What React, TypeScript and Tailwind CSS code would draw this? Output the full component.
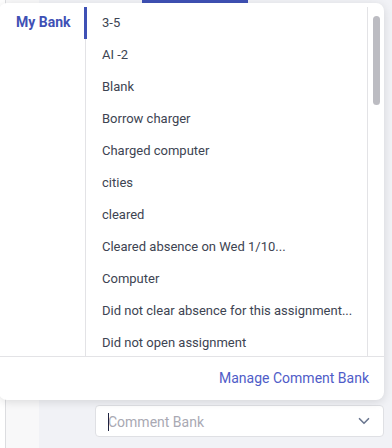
import { ChevronDown } from "lucide-react";

const comments = [
  "3-5",
  "AI -2",
  "Blank",
  "Borrow charger",
  "Charged computer",
  "cities",
  "cleared",
  "Cleared absence on Wed 1/10...",
  "Computer",
  "Did not clear absence for this assignment...",
  "Did not open assignment",
];

export default function App() {
  return (
    <div
      className="relative h-[448px] w-[392px] overflow-hidden bg-[#f1f2f6]"
      style={{ fontFamily: "Roboto, 'Liberation Sans', sans-serif" }}
    >
      {/* page behind the popover */}
      <div className="flex h-full">
        <div className="w-[6px] border-r border-[#dcdde0] bg-white" />
        <div className="w-[33px] bg-[#f8f8f9]" />
        <div className="flex flex-1 flex-col">
          <div className="flex h-[4px]">
            <div className="w-[103px]" />
            <div className="w-[106px] bg-[#3f51b5]" />
          </div>
          <div className="flex-1" />
          <div className="flex pb-[11px] pl-[56px] pr-[8px]">
            <div className="flex h-[32px] flex-1 items-center justify-between rounded border border-[#dfe0e4] bg-white pl-[12px] pr-[10px]">
              <span className="text-[14px] text-[#a9a9b3]">
                <span className="mr-[-1px] inline-block h-[18px] w-px translate-y-[4px] bg-[#1f2340]" />
                Comment Bank
              </span>
              <ChevronDown size={18} strokeWidth={2.2} className="text-[#6b7790]" />
            </div>
          </div>
        </div>
      </div>

      {/* comment bank popover */}
      <div className="absolute left-[-1px] top-[3px] flex h-[397px] w-[385px] flex-col rounded-lg bg-white shadow-[0_2px_10px_rgba(0,0,0,0.12)]">
        <div className="flex flex-1 pt-[4px]">
          <div className="w-[86px] shrink-0 pl-[17px] pt-[3px]">
            <span className="text-[14px] font-bold text-[#3f51b5]">My Bank</span>
          </div>
          <div className="relative flex-1 border-l border-[#e3e3e6]">
            <div className="absolute left-[-2px] top-0 h-[32px] w-[3px] bg-[#3f51b5]" />
            <div className="flex h-[349px] overflow-hidden border-r border-[#e3e3e6] pr-[2px]">
              <ul className="flex-1 pl-[16px]">
                {comments.map((c) => (
                  <li
                    key={c}
                    className="flex h-[32px] items-center text-[13px] text-[#3d4452]"
                  >
                    {c}
                  </li>
                ))}
              </ul>
            </div>
          </div>
          <div className="w-[16px] shrink-0 pl-[5px] pt-[9px]">
            <div className="h-[89px] w-[7px] rounded-full bg-[#bcbcc2]" />
          </div>
        </div>
        <div className="flex h-[44px] items-center justify-end border-t border-[#e3e3e6] pr-[15px]">
          <span className="text-[14px] text-[#4f5cc8]">Manage Comment Bank</span>
        </div>
      </div>
    </div>
  );
}
